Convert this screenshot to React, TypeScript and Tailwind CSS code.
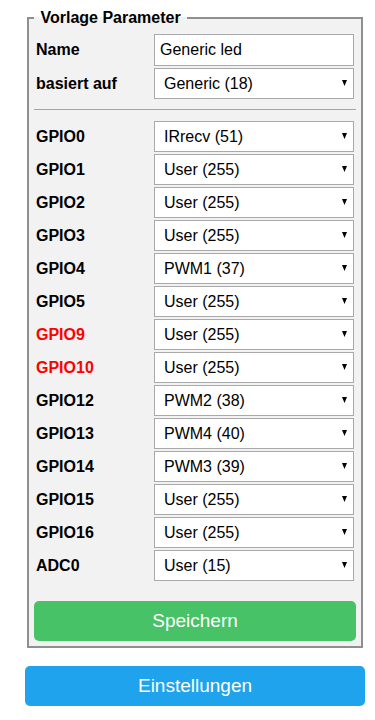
const rows: { label: string; value: string; warn?: boolean }[] = [
  { label: "GPIO0", value: "IRrecv (51)" },
  { label: "GPIO1", value: "User (255)" },
  { label: "GPIO2", value: "User (255)" },
  { label: "GPIO3", value: "User (255)" },
  { label: "GPIO4", value: "PWM1 (37)" },
  { label: "GPIO5", value: "User (255)" },
  { label: "GPIO9", value: "User (255)", warn: true },
  { label: "GPIO10", value: "User (255)", warn: true },
  { label: "GPIO12", value: "PWM2 (38)" },
  { label: "GPIO13", value: "PWM4 (40)" },
  { label: "GPIO14", value: "PWM3 (39)" },
  { label: "GPIO15", value: "User (255)" },
  { label: "GPIO16", value: "User (255)" },
  { label: "ADC0", value: "User (15)" },
];

function Select({ value }: { value: string }) {
  return (
    <div className="relative w-[200px]">
      <select
        defaultValue={value}
        className="block h-[31px] w-full appearance-none border border-[#a9a9a9] bg-white pl-[9px] text-base text-black outline-none"
      >
        <option value={value}>{value}</option>
      </select>
      {/* dropdown arrow */}
      <svg
        className="pointer-events-none absolute right-[7px] top-[12px]"
        width="5"
        height="6"
        viewBox="0 0 5 6"
      >
        <polygon points="0,0 5,0 2.5,6" fill="#000" />
      </svg>
    </div>
  );
}

function Row({ label, warn, children }: { label: string; warn?: boolean; children: React.ReactNode }) {
  return (
    <div className="flex items-center">
      <div className={`w-[120px] pl-[2px] font-bold ${warn ? "text-[#ff0000]" : "text-black"}`}>{label}</div>
      {children}
    </div>
  );
}

export default function App() {
  return (
    <div className="min-h-[720px] bg-white font-['Liberation_Sans',Arial,sans-serif] text-base text-black">
      <div className="w-[340px] pl-[25px] pt-[9px] box-content">
        <fieldset className="mx-[2px] border-2 border-[#8f8f8f] bg-[#f2f2f2] px-[5px] pb-[5px] pt-[7px]">
          <legend className="px-[2px] text-base font-bold leading-[18px]">
            &nbsp;Vorlage Parameter&nbsp;
          </legend>

          <div className="flex flex-col gap-[2px]">
            <Row label="Name">
              <input
                defaultValue="Generic led"
                className="h-[32px] w-[200px] border border-[#a9a9a9] bg-white px-[5px] text-base text-black outline-none"
              />
            </Row>
            <Row label="basiert auf">
              <Select value="Generic (18)" />
            </Row>
          </div>

          <div className="mb-[11px] mt-[10px] h-px bg-[#a6a6a6]" />

          <div className="flex flex-col gap-[2px]">
            {rows.map((r) => (
              <Row key={r.label} label={r.label} warn={r.warn}>
                <Select value={r.value} />
              </Row>
            ))}
          </div>

          <button className="mt-[20px] block h-[40px] w-full rounded-[5px] bg-[#47c266] text-[19px] text-white">
            Speichern
          </button>
        </fieldset>

        <button className="mt-[18px] block h-[40px] w-full rounded-[5px] bg-[#1fa3ec] text-[19px] text-white">
          Einstellungen
        </button>
      </div>
    </div>
  );
}
